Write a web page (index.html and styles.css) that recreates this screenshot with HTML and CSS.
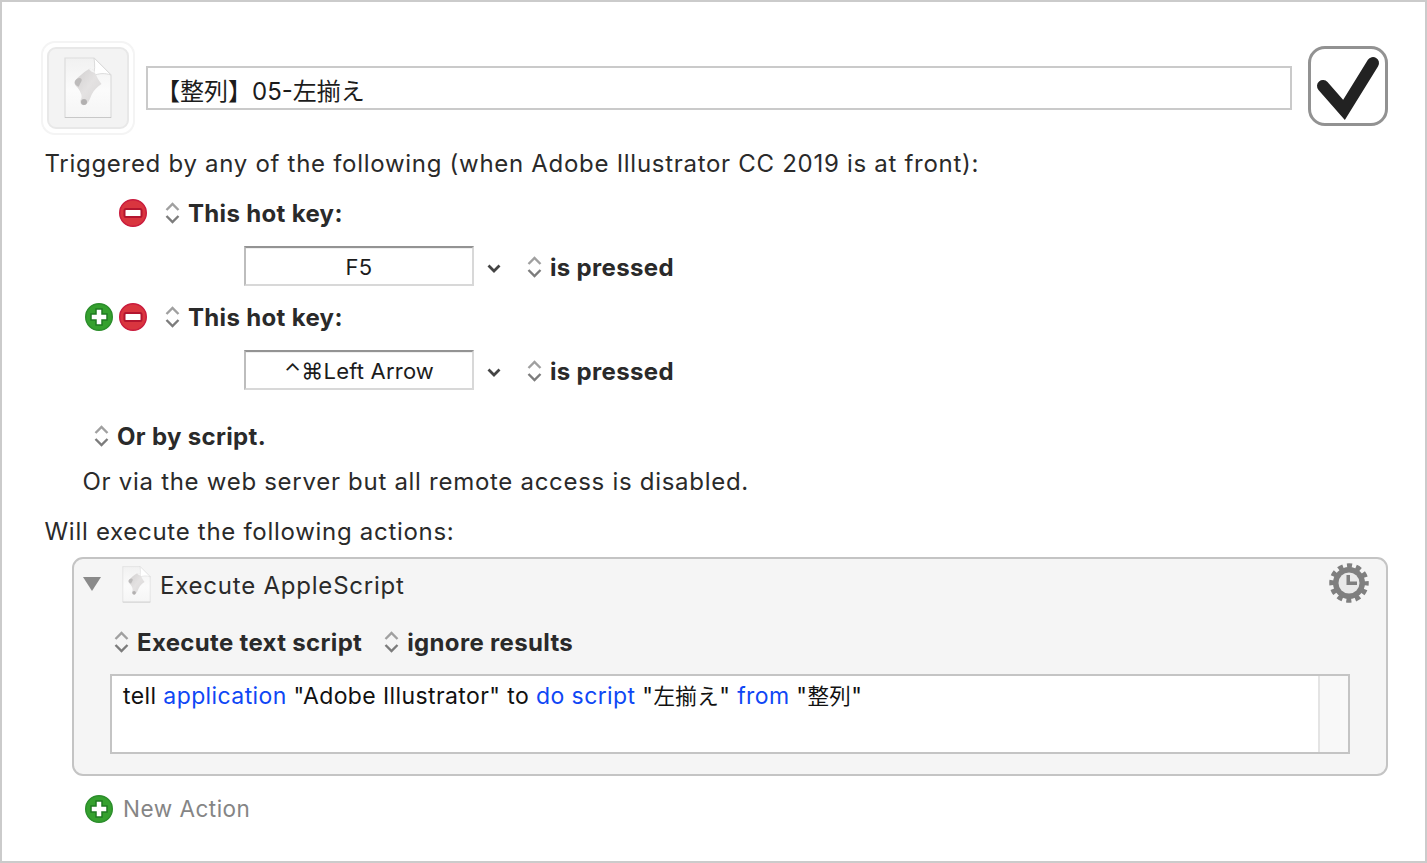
FILE: index.html
```html
<!DOCTYPE html>
<html lang="en">
<head>
<meta charset="utf-8">
<title>Macro</title>
<link rel="stylesheet" href="styles.css">
</head>
<body>
<svg class="defs" width="0" height="0" aria-hidden="true">
  <defs>
    <linearGradient id="paper" x1="0" y1="0" x2="0" y2="1">
      <stop offset="0" stop-color="#f1f1f1"/><stop offset="0.55" stop-color="#fbfbfb"/><stop offset="1" stop-color="#f5f5f5"/>
    </linearGradient>
    <linearGradient id="scroll" x1="0" y1="0" x2="1" y2="1">
      <stop offset="0" stop-color="#d0cece"/><stop offset="0.5" stop-color="#e4e2e2"/><stop offset="1" stop-color="#d8d6d6"/>
    </linearGradient>
    <symbol id="doc" viewBox="0 0 48 62">
      <path d="M1 1H30L47 18V60.500H1Z" fill="url(#paper)" stroke="#dddddd" stroke-width="1.200"/>
      <path d="M1 60.500H47" stroke="#c8c8c8" stroke-width="1.200"/>
      <path d="M30 1C31 8 31 14 29 19C35 16 41 16 47 18Z" fill="#fff" stroke="#dcdcdc" stroke-width="1"/>
      <path d="M11 24C14 20 20 15 25 12C28 11 30 13 31 16C33 20 35 24 37.500 27C33 30 30 33 28 37C26 41 25 46 21 48C17 49 15 45 17 42C19 39 16 33 12 29C10.500 27 10 26 11 24Z" fill="url(#scroll)"/>
      <path d="M25 12C28 11 30 13 31 16C28 15 26 14 25 12Z" fill="#f4f4f4"/>
      <path d="M11 24C12.500 21.500 16 20 17.500 22C18.500 24 16 26 15 29.500C13 29.500 10 27 11 24Z" fill="#bdbbbb"/>
      <circle cx="20" cy="45" r="3" fill="#b2b0b0"/>
    </symbol>
    <symbol id="minus" viewBox="0 0 28 28">
      <circle cx="14" cy="14" r="13.300" fill="#d9353f" stroke="#c91b3d" stroke-width="1.400"/>
      <rect x="5.500" y="10" width="17" height="8" rx="1.500" fill="#fff" stroke="#b3152f" stroke-width="2"/>
    </symbol>
    <symbol id="plus" viewBox="0 0 28 28">
      <circle cx="14" cy="14" r="13.300" fill="#35a02e" stroke="#2b8d2b" stroke-width="1.400"/>
      <path d="M11 6H17V11H22V17H17V22H11V17H6V11H11Z" fill="#fff" stroke="#1f7a22" stroke-width="1.500"/>
    </symbol>
    <symbol id="updown" viewBox="0 0 15 22">
      <path d="M1.500 8L7.500 2L13.500 8" fill="none" stroke="#a0a0a0" stroke-width="2.400"/>
      <path d="M1.500 14L7.500 20L13.500 14" fill="none" stroke="#7c7c7c" stroke-width="2.400"/>
    </symbol>
  </defs>
</svg>
<main class="page">
  <header class="head">
    <div class="well"><div class="well-inner"><svg class="well-doc"><use href="#doc"/></svg></div></div>
    <div class="name">【整列】05-左揃え</div>
    <div class="check">
      <svg class="check-mark" viewBox="0 0 74 74"><path d="M12 37L33 61L62 14" fill="none" stroke="#222" stroke-width="12" stroke-linecap="round" stroke-miterlimit="6"/></svg>
    </div>
  </header>

  <p class="line">Triggered by any of the following (when Adobe Illustrator CC 2019 is at front):</p>

  <div class="row hk hk1">
    <svg class="round"><use href="#minus"/></svg>
    <svg class="ud"><use href="#updown"/></svg>
    <b>This hot key:</b>
  </div>
  <div class="row key key1">
    <div class="keybox">F5</div>
    <svg class="chev" viewBox="0 0 14 9"><path d="M1.500 1.500L7 7L12.500 1.500" fill="none" stroke="#444" stroke-width="2.800"/></svg>
    <svg class="ud"><use href="#updown"/></svg>
    <b>is pressed</b>
  </div>
  <div class="row hk hk2">
    <svg class="round"><use href="#plus"/></svg>
    <svg class="round"><use href="#minus"/></svg>
    <svg class="ud"><use href="#updown"/></svg>
    <b>This hot key:</b>
  </div>
  <div class="row key key2">
    <div class="keybox">⌃⌘Left Arrow</div>
    <svg class="chev" viewBox="0 0 14 9"><path d="M1.500 1.500L7 7L12.500 1.500" fill="none" stroke="#444" stroke-width="2.800"/></svg>
    <svg class="ud"><use href="#updown"/></svg>
    <b>is pressed</b>
  </div>
  <div class="row script">
    <svg class="ud"><use href="#updown"/></svg>
    <b>Or by script.</b>
  </div>
  <p class="line via">Or via the web server but all remote access is disabled.</p>
  <p class="line will">Will execute the following actions:</p>

  <section class="action">
    <div class="action-head">
      <svg class="tri" viewBox="0 0 20 16"><path d="M1 1H19L10 15Z" fill="#8a8a8a"/></svg>
      <svg class="mini-doc"><use href="#doc"/></svg>
      <span class="action-title">Execute AppleScript</span>
      <svg class="gear" viewBox="0 0 40 40">
        <circle cx="20" cy="20" r="17" fill="none" stroke="#7f7f7f" stroke-width="5.500" stroke-dasharray="5 3.900" stroke-dashoffset="2.500"/>
        <circle cx="20" cy="20" r="16" fill="#7f7f7f"/>
        <circle cx="20" cy="20" r="10.500" fill="#e9e9e9"/>
        <path d="M17.500 12H21V18.500H28V22H17.500Z" fill="#7f7f7f"/>
      </svg>
    </div>
    <div class="opts">
      <svg class="ud"><use href="#updown"/></svg>
      <b>Execute text script</b>
      <svg class="ud ud-second"><use href="#updown"/></svg>
      <b>ignore results</b>
    </div>
    <div class="editor">
      <div class="code">tell <span class="kw">application</span> "Adobe Illustrator" to <span class="kw">do script</span> "<span class="cjk">左揃え</span>" <span class="kw">from</span> "<span class="cjk">整列</span>"</div>
      <div class="scroll"></div>
    </div>
  </section>

  <div class="row new">
    <svg class="round"><use href="#plus"/></svg>
    <span>New Action</span>
  </div>
</main>
</body>
</html>
```
FILE: styles.css
```css
* { box-sizing: border-box; }
html, body { margin: 0; padding: 0; background: #fff; }
.defs { position: absolute; }
.page {
  width: 1427px;
  height: 863px;
  border: 2px solid #cbcbcb;
  padding: 39px 0 0 38px;
  overflow: hidden;
  font-family: Inter, "Noto Sans CJK JP", sans-serif;
  font-size: 24px;
  color: #2a2a2a;
}
b { font-weight: 700; letter-spacing: 0.33px; }
.head { display: flex; align-items: center; height: 94px; }
.well {
  width: 94px; height: 94px; padding: 4px; margin-left: 1px;
  border: 2px solid #f4f4f4; border-radius: 14px;
  flex: none;
}
.well-inner {
  width: 100%; height: 100%;
  background: #f3f3f3; border: 2px solid #e8e8e8; border-radius: 9px;
  display: flex; align-items: center; justify-content: center;
}
.well-doc { width: 48px; height: 62px; }
.name {
  width: 1146px; height: 44px; margin-left: 11px;
  border: 2px solid #cacaca;
  padding: 2px 0 0 8px;
  display: flex; align-items: center;
  font-size: 24px; color: #1c1c1c;
}
.check {
  width: 80px; height: 80px; margin: -4px 0 0 16px;
  border: 3px solid #929292; border-radius: 17px;
  flex: none;
}
.check-mark { display: block; width: 74px; height: 74px; }
.line { margin: 13px 0 0; height: 30px; line-height: 32px; padding-left: 4.500px; white-space: nowrap; letter-spacing: 0.71px; }
.row { display: flex; align-items: center; white-space: nowrap; }
.round { width: 28px; height: 28px; flex: none; }
.ud { width: 15px; height: 22px; flex: none; }
.hk { height: 30px; padding-left: 79px; }
.hk1 { margin-top: 20px; }
.hk2 { margin-top: 16px; padding-left: 45px; }
.hk .round + .round { margin-left: 6px; }
.hk .ud { margin: 0 8px 0 18px; }
.key { height: 40px; padding-left: 204px; }
.key1 { margin-top: 18px; }
.key2 { margin-top: 18px; }
.key b { margin-top: 2px; margin-left: 8px; }
.key .ud { margin-top: 2px; }
.keybox {
  width: 230px; height: 40px;
  border-style: solid; border-width: 2px;
  border-color: #939393 #d8d8d8 #d8d8d8 #bdbdbd;
  box-shadow: inset 0 1px 0 #efefef;
  background: #fff;
  padding-top: 1px;
  display: flex; align-items: center; justify-content: center;
  font-family: Inter, "DejaVu Sans", "Noto Sans CJK JP", sans-serif;
  font-size: 22px; letter-spacing: 0.2px; color: #1c1c1c;
}
.chev { width: 14px; height: 9px; margin: 4px 0 0 13px; flex: none; }
.key .chev + .ud { margin-left: 26px; }
.script { height: 30px; margin-top: 31px; padding-left: 54px; }
.script b { margin-left: 8px; }
.line.via { margin-top: 15px; padding-left: 42.500px; }
.line.will { margin-top: 20px; }
.action {
  width: 1316px; height: 219px;
  margin: 11px 0 0 32px;
  background: #f5f5f5;
  border: 2px solid #c4c4c4;
  border-radius: 11px;
  padding: 5px 0 0 0;
}
.action-head { display: flex; align-items: center; height: 40px; padding: 0 17px 0 8px; }
.tri { width: 20px; height: 16px; flex: none; }
.mini-doc { width: 29px; height: 37px; margin-left: 20px; flex: none; }
.action-title { margin: 2px 0 0 9px; letter-spacing: 0.78px; }
.gear { width: 40px; height: 40px; margin-left: auto; margin-top: -2px; flex: none; }
.opts { display: flex; align-items: center; height: 30px; margin-top: 23px; padding-left: 40px; white-space: nowrap; }
.opts b { margin-left: 8px; }
.opts .ud-second { margin-left: 22px; }
.editor {
  display: flex;
  width: 1240px; height: 80px;
  margin: 17px 0 0 36px;
  background: #fff;
  border: 2px solid #c4c4c4;
}
.code {
  flex: 1;
  padding: 6px 0 0 11px;
  font-size: 23px; line-height: 28px; color: #111; letter-spacing: 0.4px;
  white-space: nowrap;
}
.cjk { font-size: 21.500px; }
.kw { color: #0f47f5; }
.scroll { width: 30px; background: #f8f8f8; border-left: 2px solid #e4e4e4; }
.new { height: 30px; margin-top: 18px; padding-left: 45px; color: #858585; font-size: 22.500px; }
.new span { margin: 0 0 2px 10px; letter-spacing: 0.5px; }
```
